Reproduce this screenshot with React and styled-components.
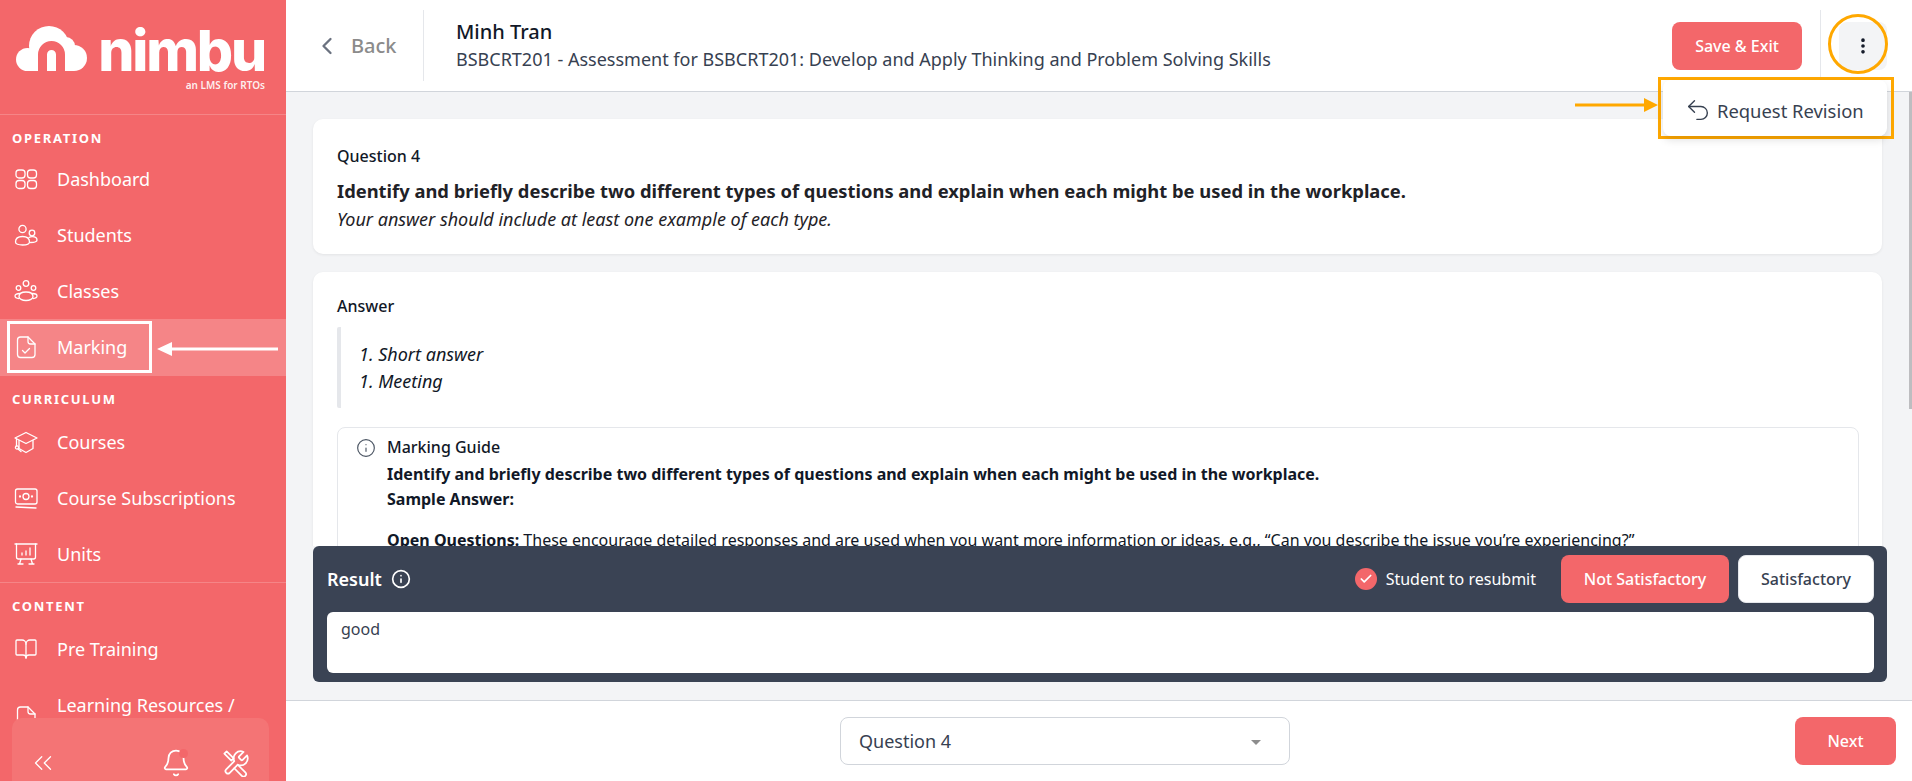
import React from 'react'
import styled, { createGlobalStyle } from 'styled-components'
import { Bell, BookOpen, Check, ChevronLeft, ChevronsLeft, EllipsisVertical, Info, Undo2 } from 'lucide-react'

const coral = '#f3676a'
const slate = '#3a4354'
const amber = '#ffa800'

const GlobalStyle = createGlobalStyle`
  html, body { margin: 0; padding: 0; height: 100%; overflow: hidden; }
  body { font-family: 'Noto Sans', sans-serif; color: #111827; background: #fff; }
  * { box-sizing: border-box; }
`

const Page = styled.div`
  display: flex;
  height: 781px;
  overflow: hidden;
`

/* sidebar */
const Sidebar = styled.aside`
  position: relative;
  flex: 0 0 286px;
  height: 100%;
  overflow: hidden;
  background: ${coral};
  color: #fff;
`
const LogoBlock = styled.div`
  height: 114px;
  padding: 20px 21px 0 16px;
  display: flex;
  flex-direction: column;
  align-items: flex-end;
`
const LogoRow = styled.div`
  display: flex;
  align-items: flex-end;
  justify-content: space-between;
  width: 100%;
  height: 52px;
`
const LogoWord = styled.span`
  font-family: 'Inter', sans-serif;
  font-weight: 800;
  font-size: 57px;
  line-height: 52px;
  letter-spacing: -2.2px;
  margin-bottom: -5px;
  color: #fff;
`
const LogoTag = styled.span`
  font-size: 10px;
  line-height: 14px;
  font-weight: 600;
  margin-top: 6px;
  color: rgba(255, 255, 255, 0.9);
`
const Section = styled.section`
  border-top: 1px solid rgba(255, 255, 255, 0.2);
`
const SectionLabel = styled.div`
  padding: 12px 12px ${p => p.$bottom}px;
  font-size: 13px;
  line-height: 22px;
  font-weight: 700;
  letter-spacing: 1.7px;
`
const NavItem = styled.div`
  position: relative;
  display: flex;
  align-items: center;
  gap: 19px;
  padding: 16px 14px;
  font-size: 18px;
  line-height: 24px;
  background: ${p => (p.$active ? 'rgba(255, 255, 255, 0.2)' : 'transparent')};
  svg { flex: 0 0 24px; }
`
const NavText = styled.span`
  width: 200px;
`
const Callout = styled.div`
  position: absolute;
  left: 7px;
  top: 2px;
  width: 145px;
  height: 52px;
  border: 3px solid #fff;
`
const CalloutArrow = styled.svg`
  position: absolute;
  left: 157px;
  top: 22px;
`
const Tray = styled.div`
  position: absolute;
  left: 12px;
  right: 17px;
  bottom: -27px;
  height: 90px;
  padding: 0 16px;
  border-radius: 10px;
  background: #f47475;
  display: flex;
  align-items: center;
`
const TrayIcon = styled.span`
  position: relative;
  display: flex;
  margin-left: ${p => p.$gap || 0}px;
`
const BellDot = styled.span`
  position: absolute;
  left: 18px;
  top: 1px;
  width: 9px;
  height: 9px;
  border-radius: 50%;
  background: ${coral};
`

/* main column */
const Main = styled.main`
  position: relative;
  flex: 1;
  min-width: 0;
  display: flex;
  flex-direction: column;
  background: #f3f4f6;
`
const Header = styled.header`
  position: relative;
  z-index: 2;
  flex: 0 0 92px;
  display: flex;
  align-items: center;
  padding: 0 25px 0 0;
  background: #fff;
  border-bottom: 1px solid #d1d5db;
`
const BackLink = styled.div`
  flex: 0 0 138px;
  height: 71px;
  display: flex;
  align-items: center;
  gap: 10px;
  padding-left: 27px;
  border-right: 1px solid #e5e7eb;
  color: #8b8b8b;
  font-size: 20px;
  font-weight: 500;
`
const TitleBlock = styled.div`
  flex: 1;
  padding-left: 32px;
`
const StudentName = styled.div`
  margin-top: -2px;
  font-size: 20px;
  line-height: 28px;
  font-weight: 500;
  color: #111827;
`
const AssessmentName = styled.div`
  font-size: 18px;
  line-height: 26px;
  color: #374151;
`
const Button = styled.button`
  height: 48px;
  width: ${p => p.$width}px;
  border-radius: 8px;
  border: ${p => (p.$light ? '1px solid #e5e7eb' : 'none')};
  background: ${p => (p.$light ? '#fff' : coral)};
  color: ${p => (p.$light ? '#374151' : '#fff')};
  font-family: inherit;
  font-size: 16px;
  font-weight: 500;
`
const HeaderDivider = styled.div`
  width: 1px;
  height: 71px;
  margin: 0 18px;
  background: #e5e7eb;
`
const Kebab = styled.div`
  position: relative;
  width: 48px;
  height: 48px;
  border-radius: 8px;
  background: #f3f4f6;
  display: flex;
  align-items: center;
  justify-content: center;
  color: #111827;
`
const KebabRing = styled.span`
  position: absolute;
  left: -11px;
  top: -8px;
  width: 60px;
  height: 60px;
  border: 3px solid ${amber};
  border-radius: 50%;
`
const MenuFrame = styled.div`
  position: absolute;
  right: -7px;
  top: 55px;
  width: 236px;
  height: 62px;
  border: 3px solid ${amber};
  padding: 0 4px 0 2px;
`
const Menu = styled.div`
  height: 56px;
  border-radius: 8px;
  background: #fff;
  box-shadow: 0 4px 8px rgba(0, 0, 0, 0.12);
  display: flex;
  align-items: center;
  gap: 5px;
  padding: 5px 0 0 21px;
  font-size: 18.4px;
  color: #374151;
`
const MenuArrow = styled.svg`
  position: absolute;
  left: -86px;
  top: 17px;
`

/* body */
const Scroller = styled.div`
  flex: 1;
  min-height: 0;
  overflow: hidden;
  padding: 27px 30px 0 27px;
`
const Thumb = styled.div`
  position: absolute;
  right: 0;
  top: 92px;
  width: 3px;
  height: 317px;
  background: #bdbdc0;
`
const Card = styled.section`
  background: #fff;
  border-radius: 10px;
  padding: ${p => p.$top}px 23px 23px 24px;
  margin-bottom: 18px;
  box-shadow: 0 1px 3px rgba(0, 0, 0, 0.07);
`
const Label = styled.div`
  font-size: 16px;
  line-height: 22px;
  font-weight: 500;
  color: #111827;
  margin-bottom: ${p => p.$gap || 0}px;
`
const QuestionTitle = styled.div`
  font-size: 18.35px;
  line-height: 24px;
  font-weight: 700;
  color: #1f2227;
`
const QuestionHint = styled.div`
  margin-top: 4px;
  font-size: 18px;
  line-height: 24px;
  font-style: italic;
  color: #1f2227;
`
const Quote = styled.blockquote`
  margin: 0 0 19px;
  height: 81px;
  padding: 14px 0 0 18px;
  border-left: 4px solid #e5e7eb;
  border-radius: 2px;
  font-size: 18px;
  line-height: 27px;
  font-style: italic;
`
const Guide = styled.div`
  display: flex;
  gap: 11px;
  padding: 7px 16px 8px 18px;
  border: 1px solid #e5e7eb;
  border-radius: 8px;
  color: #111827;
`
const GuideIcon = styled.span`
  display: flex;
  color: #4b5563;
  margin-top: 3px;
`
const GuideBody = styled.div`
  font-size: 16px;
  line-height: 25px;
`
const GuideTitle = styled.div`
  margin-bottom: 2px;
  font-weight: 500;
`
const GuideGap = styled.div`
  height: 16px;
`

/* result panel */
const Result = styled.section`
  position: relative;
  z-index: 1;
  flex: 0 0 136px;
  margin: 0 25px 18px 27px;
  padding: 9px 13px 9px 14px;
  border-radius: 6px;
  background: ${slate};
`
const ResultTop = styled.div`
  display: flex;
  align-items: center;
  height: 48px;
  margin-bottom: 9px;
  color: #fff;
`
const ResultTitle = styled.div`
  display: flex;
  align-items: center;
  gap: 9px;
  flex: 1;
  font-size: 18px;
  font-weight: 600;
`
const Resubmit = styled.div`
  display: flex;
  align-items: center;
  gap: 9px;
  margin-right: 25px;
  font-size: 16px;
`
const CheckDot = styled.span`
  width: 22px;
  height: 22px;
  border-radius: 50%;
  background: ${coral};
  display: flex;
  align-items: center;
  justify-content: center;
`
const ResultButtons = styled.div`
  display: flex;
  gap: 9px;
`
const Comment = styled.div`
  height: 61px;
  padding: 6px 14px;
  border-radius: 6px;
  background: #fff;
  font-size: 16px;
  line-height: 22px;
  color: #374151;
`

/* footer */
const Footer = styled.footer`
  position: relative;
  z-index: 1;
  flex: 0 0 81px;
  display: flex;
  align-items: center;
  justify-content: space-between;
  padding: 0 16px 0 554px;
  background: #fff;
  border-top: 1px solid #d1d5db;
`
const Select = styled.div`
  width: 450px;
  height: 48px;
  padding: 0 28px 0 18px;
  border: 1px solid #d1d5db;
  border-radius: 8px;
  display: flex;
  align-items: center;
  justify-content: space-between;
  font-size: 18px;
  color: #374151;
`
const Caret = styled.span`
  width: 0;
  height: 0;
  margin-top: 3px;
  border-left: 5px solid transparent;
  border-right: 5px solid transparent;
  border-top: 5px solid #8d8d8d;
`

const stroke = { fill: 'none', stroke: '#fff', strokeWidth: 1.3, strokeLinecap: 'round', strokeLinejoin: 'round' }

function Glyph({ children }) {
  return <svg width="24" height="24" viewBox="0 0 24 24" {...stroke}>{children}</svg>
}

const DashboardIcon = () => (
  <Glyph>
    <rect x="2" y="3" width="9" height="8" rx="3" />
    <rect x="13.500" y="3" width="9" height="8" rx="3" />
    <rect x="2" y="13.500" width="9" height="8" rx="3" />
    <rect x="13.500" y="13.500" width="9" height="8" rx="3" />
  </Glyph>
)
const StudentsIcon = () => (
  <Glyph>
    <circle cx="8.500" cy="6" r="3.600" />
    <circle cx="18" cy="10" r="2.800" />
    <path d="M1.500 19c0-3.500 3-5.500 7-5.500s7 2 7 5.500c0 2-3 3-7 3s-7-1-7-3z" />
    <path d="M15 14.500c1-.6 2-.8 3.200-.8 2.600 0 4.800 1.300 4.800 3.300 0 1.700-2.400 2.500-6.500 2.500" />
  </Glyph>
)
const ClassesIcon = () => (
  <Glyph>
    <circle cx="12" cy="4.500" r="2.800" />
    <circle cx="4.500" cy="9" r="2.300" />
    <circle cx="19.500" cy="9" r="2.300" />
    <path d="M5 17.500c0-2.800 3-4.500 7-4.500s7 1.700 7 4.500c0 2.200-3 4-7 4s-7-1.800-7-4z" />
    <path d="M5.500 14.500c-2.300 0-4.500 1-4.500 2.500s1.500 2.300 4 2.500M18.500 14.500c2.300 0 4.500 1 4.500 2.500s-1.500 2.300-4 2.500" />
  </Glyph>
)
const MarkingIcon = () => (
  <Glyph>
    <path d="M6.500 2h7.500l7 7v10.500a3 3 0 0 1-3 3H6.500a3 3 0 0 1-3-3v-14.500a3 3 0 0 1 3-3z" />
    <path d="M14 2v4.500a2.500 2.500 0 0 0 2.500 2.500h4.500" />
    <path d="M8.500 15.500l2.500 2.500 4.500-4.500" />
  </Glyph>
)
const CoursesIcon = () => (
  <Glyph>
    <path d="M12 2.500l11 5.500-11 5.500-11-5.500z" />
    <path d="M5 10.500v8l7 4 7-4v-8" />
    <path d="M2.500 9v7" />
    <circle cx="3" cy="17.500" r="1.600" />
    <path d="M4 19l3 2.500" />
  </Glyph>
)
const MoneyIcon = () => (
  <Glyph>
    <rect x="1.500" y="3" width="21.500" height="15" rx="2" />
    <circle cx="12" cy="10.500" r="3" />
    <circle cx="6" cy="10.500" r=".5" />
    <circle cx="18" cy="10.500" r=".5" />
    <path d="M2 21l20 1" />
  </Glyph>
)
const UnitsIcon = () => (
  <Glyph>
    <path d="M1 2h22" />
    <path d="M2.500 2v13a2 2 0 0 0 2 2h15a2 2 0 0 0 2-2V2" />
    <path d="M8 13v-2M12 13V9M16 13V6" />
    <path d="M7 17l-1.500 5M17 17l1.500 5M4 22h5M15 22h5" />
  </Glyph>
)
const FileIcon = () => (
  <Glyph>
    <path d="M6.500 2h7.500l7 7v10.500a3 3 0 0 1-3 3H6.500a3 3 0 0 1-3-3v-14.500a3 3 0 0 1 3-3z" />
    <path d="M14 2v4.500a2.500 2.500 0 0 0 2.500 2.500h4.500" />
  </Glyph>
)
const ToolsIcon = () => (
  <svg width="28" height="28" viewBox="0 0 24 24" {...stroke} strokeWidth="1.500">
    <path d="M14.700 6.300a1 1 0 0 0 0 1.400l1.600 1.600a1 1 0 0 0 1.400 0l3.770-3.770a6 6 0 0 1-7.940 7.940l-6.910 6.910a2.120 2.120 0 0 1-3-3l6.910-6.910a6 6 0 0 1 7.940-7.940l-3.760 3.760z" />
    <path d="M2 4l2-2 6 6-2 2z" />
    <path d="M13.500 13.500l6.500 6.500a2 2 0 0 1-3 3l-6.500-6.500" />
  </svg>
)
const CloudLogo = () => (
  <svg width="72" height="46" viewBox="0 0 72 46">
    <g fill="#fff">
      <circle cx="11.500" cy="33.500" r="11.500" />
      <circle cx="33" cy="20" r="20" />
      <circle cx="58" cy="32" r="13" />
      <circle cx="50" cy="20" r="9" />
      <rect x="11" y="26" width="47" height="19" />
    </g>
    <path d="M26.500 46V28.500a9 9 0 0 1 18 0V46" fill="none" stroke={coral} strokeWidth="9" />
  </svg>
)

const sections = [
  {
    label: 'OPERATION',
    bottom: 2,
    items: [
      { text: 'Dashboard', icon: <DashboardIcon /> },
      { text: 'Students', icon: <StudentsIcon /> },
      { text: 'Classes', icon: <ClassesIcon /> },
      { text: 'Marking', icon: <MarkingIcon />, active: true },
    ],
  },
  {
    label: 'CURRICULUM',
    bottom: 4,
    items: [
      { text: 'Courses', icon: <CoursesIcon /> },
      { text: 'Course Subscriptions', icon: <MoneyIcon /> },
      { text: 'Units', icon: <UnitsIcon /> },
    ],
  },
  {
    label: 'CONTENT',
    bottom: 4,
    items: [
      { text: 'Pre Training', icon: <BookOpen size={24} strokeWidth={1.3} /> },
      { text: 'Learning Resources / Assessments', icon: <FileIcon /> },
    ],
  },
]

export default function App() {
  return (
    <Page>
      <GlobalStyle />
      <Sidebar>
        <LogoBlock>
          <LogoRow>
            <CloudLogo />
            <LogoWord>nimbu</LogoWord>
          </LogoRow>
          <LogoTag>an LMS for RTOs</LogoTag>
        </LogoBlock>
        {sections.map(section => (
          <Section key={section.label}>
            <SectionLabel $bottom={section.bottom}>{section.label}</SectionLabel>
            {section.items.map(item => (
              <NavItem key={item.text} $active={item.active}>
                {item.icon}
                <NavText>{item.text}</NavText>
                {item.active && (
                  <>
                    <Callout />
                    <CalloutArrow width="122" height="16" viewBox="0 0 122 16">
                      <path d="M0 8l15-7v5.500h106v3H15V15z" fill="#fff" />
                    </CalloutArrow>
                  </>
                )}
              </NavItem>
            ))}
          </Section>
        ))}
        <Tray>
          <ChevronsLeft size={30} strokeWidth={1} />
          <TrayIcon $gap={103}>
            <Bell size={30} strokeWidth={1.4} />
            <BellDot />
          </TrayIcon>
          <TrayIcon $gap={31}>
            <ToolsIcon />
          </TrayIcon>
        </Tray>
      </Sidebar>

      <Main>
        <Header>
          <BackLink>
            <ChevronLeft size={28} strokeWidth={2} color="#6b7280" />
            Back
          </BackLink>
          <TitleBlock>
            <StudentName>Minh Tran</StudentName>
            <AssessmentName>BSBCRT201 - Assessment for BSBCRT201: Develop and Apply Thinking and Problem Solving Skills</AssessmentName>
          </TitleBlock>
          <Button $width={130}>Save &amp; Exit</Button>
          <HeaderDivider />
          <Kebab>
            <EllipsisVertical size={20} strokeWidth={2.4} />
            <KebabRing />
            <MenuFrame>
              <MenuArrow width="84" height="16" viewBox="0 0 84 16">
                <path d="M0 6.500h69V1l14 7-14 7V9.500H0z" fill={amber} />
              </MenuArrow>
              <Menu>
                <Undo2 size={28} strokeWidth={1.2} />
                Request Revision
              </Menu>
            </MenuFrame>
          </Kebab>
        </Header>

        <Scroller>
          <Card $top={26}>
            <Label $gap={12}>Question 4</Label>
            <QuestionTitle>Identify and briefly describe two different types of questions and explain when each might be used in the workplace.</QuestionTitle>
            <QuestionHint>Your answer should include at least one example of each type.</QuestionHint>
          </Card>
          <Card $top={23}>
            <Label $gap={10}>Answer</Label>
            <Quote>
              1. Short answer
              <br />
              1. Meeting
            </Quote>
            <Guide>
              <GuideIcon>
                <Info size={20} strokeWidth={1.4} />
              </GuideIcon>
              <GuideBody>
                <GuideTitle>Marking Guide</GuideTitle>
                <strong>Identify and briefly describe two different types of questions and explain when each might be used in the workplace.</strong>
                <br />
                <strong>Sample Answer:</strong>
                <GuideGap />
                <strong>Open Questions:</strong> These encourage detailed responses and are used when you want more information or ideas, e.g., “Can you describe the issue you’re experiencing?”
              </GuideBody>
            </Guide>
          </Card>
        </Scroller>
        <Thumb />

        <Result>
          <ResultTop>
            <ResultTitle>
              Result
              <Info size={20} strokeWidth={2} />
            </ResultTitle>
            <Resubmit>
              <CheckDot>
                <Check size={14} strokeWidth={3} />
              </CheckDot>
              Student to resubmit
            </Resubmit>
            <ResultButtons>
              <Button $width={168}>Not Satisfactory</Button>
              <Button $width={136} $light>Satisfactory</Button>
            </ResultButtons>
          </ResultTop>
          <Comment>good</Comment>
        </Result>

        <Footer>
          <Select>
            Question 4
            <Caret />
          </Select>
          <Button $width={101}>Next</Button>
        </Footer>
      </Main>
    </Page>
  )
}
